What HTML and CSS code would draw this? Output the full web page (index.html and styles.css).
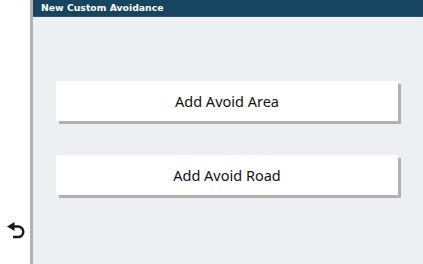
FILE: index.html
```html
<!DOCTYPE html>
<html>
<head>
<meta charset="utf-8">
<link rel="stylesheet" href="styles.css">
</head>
<body>
<div class="app">
  <aside class="side">
    <button class="back" aria-label="Back">
      <svg width="18" height="17" viewBox="0 0 18 17">
        <path d="M0 4.5 L7.5 0 L7.5 9 Z" fill="#1a1a1a"/>
        <path d="M6 4.5 H11 A5.3 5.3 0 0 1 11 15.1 H6" fill="none" stroke="#1a1a1a" stroke-width="2.5"/>
      </svg>
    </button>
  </aside>
  <main class="main">
    <header class="title">New Custom Avoidance</header>
    <div class="list">
      <button class="item">Add Avoid Area</button>
      <button class="item">Add Avoid Road</button>
    </div>
  </main>
</div>
</body>
</html>
```
FILE: styles.css
```css
html, body { margin: 0; padding: 0; }
body { width: 423px; height: 264px; overflow: hidden; font-family: "DejaVu Sans", sans-serif; }
.app { display: flex; height: 264px; }
.side { width: 30px; background: #fff; border-right: 3px solid #b3b3b3; display: flex; flex-direction: column; justify-content: flex-end; align-items: flex-start; padding-bottom: 25px; box-sizing: content-box; }
.back { border: 0; background: none; padding: 0; margin-left: 7px; width: 18px; height: 17px; display: block; }
.back svg { display: block; }
.main { flex: 1; background: #ecf0f3; display: flex; flex-direction: column; }
.title { height: 17px; background: #17445f; border-bottom: 1px solid #2a5670; color: #fff; font-weight: bold; font-size: 9.3px; line-height: 16px; padding-left: 8px; box-sizing: border-box; }
.list { display: flex; flex-direction: column; gap: 34px; padding: 64px 0 0 23px; }
.item { width: 342px; height: 40px; border: 0; background: #fff; box-shadow: 3px 3px 0 #b0b0b0; font-family: "Noto Sans", sans-serif; font-size: 14.5px; color: #111; padding: 0; }
```
